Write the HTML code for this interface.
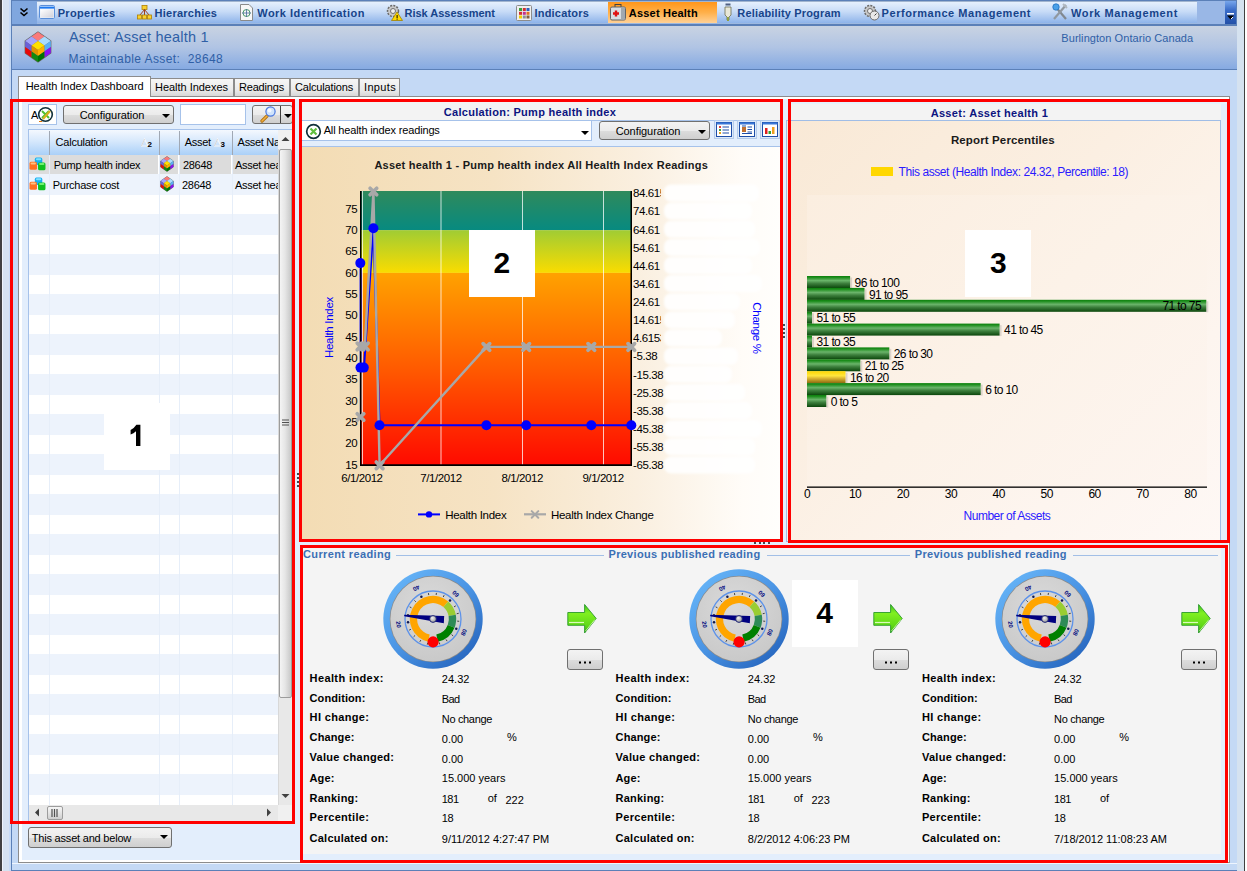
<!DOCTYPE html>
<html><head><meta charset="utf-8"><style>
*{box-sizing:border-box}
body{margin:0;width:1247px;height:871px;overflow:hidden;position:relative;background:#fff;font-family:"Liberation Sans",sans-serif;}
.a{position:absolute}
.t{position:absolute;white-space:pre;line-height:1}
.tb{font-weight:bold;font-size:11px;color:#17448a}
.btn{position:absolute;border:1px solid #707070;border-radius:3px;background:linear-gradient(#f3f3f3 0%,#ebebeb 50%,#dddddd 51%,#cfcfcf 100%)}
.tri{position:absolute;width:0;height:0;border-left:4px solid transparent;border-right:4px solid transparent;border-top:4px solid #000}
</style></head><body>
<!-- outer frame -->
<div class="a" style="left:0;top:0;width:2px;height:871px;background:#404040"></div>
<div class="a" style="left:2px;top:0;width:1px;height:871px;background:#eef3fa"></div>
<div class="a" style="left:3px;top:0;width:7px;height:871px;background:#d5e2f0"></div>
<div class="a" style="left:9px;top:0;width:2px;height:871px;background:#c7dbf6"></div>
<div class="a" style="left:11px;top:0;width:1px;height:871px;background:#5b80b8"></div>
<div class="a" style="left:12px;top:0;width:1225px;height:871px;background:#c4d9f5"></div>
<div class="a" style="left:12px;top:870px;width:1225px;height:1px;background:#5b80b8"></div>
<div class="a" style="left:1237px;top:0;width:7px;height:871px;background:#d5e2f0"></div>
<div class="a" style="left:1244px;top:0;width:1px;height:871px;background:#404040"></div>

<!-- toolbar -->
<div class="a" style="left:12px;top:0;width:1225px;height:26px;background:#5b80b8"></div>
<div class="a" style="left:12px;top:1px;width:1225px;height:23px;background:linear-gradient(#8098b8 0px,#e4effd 1.5px,#c8dcf7 45%,#8fb4ea 95%,#a8bcd8 100%)"></div>
<div class="a" style="left:12px;top:1px;width:25px;height:23px;background:#80a7df"></div>
<svg class="a" style="left:19px;top:7px" width="10" height="10" viewBox="0 0 10 10"><path d="M1.5 1.5 L5 4.5 L8.5 1.5 M1.5 5.5 L5 8.5 L8.5 5.5" stroke="#000" stroke-width="1.6" fill="none"></path></svg>
<div class="a" style="left:608px;top:2px;width:109px;height:21px;background:linear-gradient(#ff961a,#ffb04a 50%,#ffd196)"></div>
<div class="a" style="left:1197px;top:1px;width:28px;height:23px;background:#99b7e6"></div>
<div class="a" style="left:1225px;top:1px;width:11px;height:23px;background:linear-gradient(#77a6ec,#3a6cc8 40%,#2451a8)"></div>
<svg class="a" style="left:1226px;top:12px" width="9" height="9" viewBox="0 0 9 9"><rect x="1" y="1" width="7" height="1.5" fill="#fff"></rect><path d="M1 3.5 L8 3.5 L4.5 7.5Z" fill="#000"></path><path d="M5 7 L7 5" stroke="#fff" stroke-width="1"></path></svg>

<!-- toolbar icons -->
<svg class="a" style="left:39px;top:5px" width="16" height="14" viewBox="0 0 16 14"><defs><linearGradient id="gp" x1="0" y1="0" x2="1" y2="1"><stop offset="0" stop-color="#ffffff"></stop><stop offset="1" stop-color="#d0d0da"></stop></linearGradient></defs><rect x="0.5" y="0.5" width="15" height="13" rx="1.2" fill="#eaf2fc" stroke="#5a8ed8"></rect><rect x="1" y="1.6" width="14" height="2" fill="#1c78f0"></rect><rect x="1.5" y="4.5" width="13" height="8" fill="url(#gp)"></rect></svg>
<span class="t tb" style="left: 57.7px; top: 7.5px; letter-spacing: 0.328px;">Properties</span>
<svg class="a" style="left:137px;top:5px" width="15" height="15" viewBox="0 0 15 15"><rect x="5" y="0.5" width="5" height="4" fill="#f8d030" stroke="#b08000" stroke-width="0.8"></rect><path d="M7.5 4.5 L3 10 M7.5 4.5 L12 10 M7.5 4.5 L7.5 10" stroke="#a04020" stroke-width="1"></path><rect x="0.5" y="10" width="4" height="4" fill="#f8d030" stroke="#b08000" stroke-width="0.8"></rect><rect x="5.5" y="10" width="4" height="4" fill="#f8d030" stroke="#b08000" stroke-width="0.8"></rect><rect x="10.5" y="10" width="4" height="4" fill="#f8d030" stroke="#b08000" stroke-width="0.8"></rect></svg>
<span class="t tb" style="left: 154.6px; top: 7.5px; letter-spacing: 0.242px;">Hierarchies</span>
<svg class="a" style="left:240px;top:4px" width="13" height="17" viewBox="0 0 13 17"><path d="M0.5 0.5 H9 L12.5 4 V16.5 H0.5Z" fill="#f7f7f7" stroke="#8a8a8a"></path><circle cx="6.5" cy="9" r="3.5" fill="none" stroke="#4a9a6a"></circle><path d="M2 9 H11 M6.5 5 V13" stroke="#4a6a9a" stroke-width="0.8"></path></svg>
<span class="t tb" style="left: 257.3px; top: 7.5px; letter-spacing: 0.462px;">Work Identification</span>
<svg class="a" style="left:386px;top:4px" width="17" height="17" viewBox="0 0 17 17"><circle cx="7" cy="7" r="5.5" fill="#c8c8c8" stroke="#6a6a6a" stroke-width="1.5" stroke-dasharray="2 1.2"></circle><circle cx="7" cy="7" r="2.5" fill="#f0f0f0" stroke="#707070"></circle><path d="M11 8 L16.5 16.5 H5.5Z" fill="#ffd800" stroke="#a08000" stroke-width="0.8"></path><rect x="10.6" y="11" width="1" height="3" fill="#000"></rect><rect x="10.6" y="14.6" width="1" height="1" fill="#000"></rect></svg>
<span class="t tb" style="left: 404.6px; top: 7.5px; letter-spacing: -0.034px;">Risk Assessment</span>
<svg class="a" style="left:516px;top:5px" width="16" height="16" viewBox="0 0 16 16"><rect x="0.5" y="0.5" width="15" height="15" rx="1" fill="#f0f0f0" stroke="#8c8c8c"></rect><rect x="3" y="3" width="3" height="3" fill="#3aa03a"></rect><rect x="6.8" y="3" width="3" height="3" fill="#d03030"></rect><rect x="10.5" y="3" width="3" height="3" fill="#3060c0"></rect><rect x="3" y="6.8" width="3" height="3" fill="#d03030"></rect><rect x="6.8" y="6.8" width="3" height="3" fill="#c03090"></rect><rect x="10.5" y="6.8" width="3" height="3" fill="#e07020"></rect><rect x="3" y="10.5" width="3" height="3" fill="#f0d000"></rect><rect x="6.8" y="10.5" width="3" height="3" fill="#909090"></rect><rect x="10.5" y="10.5" width="3" height="3" fill="#806040"></rect></svg>
<span class="t tb" style="left: 534.5px; top: 7.5px; letter-spacing: 0.192px;">Indicators</span>
<svg class="a" style="left:610px;top:4px" width="16" height="17" viewBox="0 0 16 17"><rect x="5" y="0.5" width="6" height="3" fill="none" stroke="#404040"></rect><rect x="0.5" y="3" width="15" height="13" rx="1.5" fill="#d8dde2" stroke="#606468"></rect><rect x="11" y="3.5" width="4" height="12" fill="#a0a8b0"></rect><path d="M3 9.5 H9 M6 6.5 V12.5" stroke="#e01010" stroke-width="2.4"></path></svg>
<span class="t tb" style="left: 628.8px; top: 7.5px; color: rgb(0, 0, 0); letter-spacing: 0.205px;">Asset Health</span>
<svg class="a" style="left:724px;top:3px" width="8" height="19" viewBox="0 0 8 19"><rect x="1.5" y="0.5" width="5" height="2" fill="#506080"></rect><path d="M1 4 H7 V12 L5 14 V17 H3 V14 L1 12Z" fill="#e8e8d8" stroke="#707050" stroke-width="0.8"></path><rect x="3" y="14" width="2" height="4" fill="#90a040"></rect></svg>
<span class="t tb" style="left: 737.3px; top: 7.5px; letter-spacing: 0.165px;">Reliability Program</span>
<svg class="a" style="left:863px;top:4px" width="17" height="17" viewBox="0 0 17 17"><circle cx="7" cy="7" r="5.5" fill="#c8c8c8" stroke="#6a6a6a" stroke-width="1.5" stroke-dasharray="2 1.2"></circle><circle cx="7" cy="7" r="2.5" fill="#f0f0f0" stroke="#707070"></circle><circle cx="11.5" cy="11.5" r="4.5" fill="#e8e8e8" stroke="#6a6a6a"></circle><path d="M11.5 11.5 L13.5 9.5" stroke="#404040"></path></svg>
<span class="t tb" style="left: 881.6px; top: 7.5px; letter-spacing: 0.539px;">Performance Management</span>
<svg class="a" style="left:1052px;top:3px" width="16" height="18" viewBox="0 0 16 18"><path d="M2 2 L14 16" stroke="#808890" stroke-width="2.2"></path><path d="M14 2 L2 16" stroke="#9098a0" stroke-width="2.2"></path><circle cx="4" cy="4" r="3.2" fill="#4aa0e8" stroke="#2070c0" stroke-width="0.8"></circle><path d="M11 1 L15 5" stroke="#b0b8c0" stroke-width="2"></path></svg>
<span class="t tb" style="left: 1071px; top: 7.5px; letter-spacing: 0.627px;">Work Management</span>

<div class="a" style="left:1236px;top:0;width:1px;height:26px;background:#5b80b8"></div>
<!-- header band -->
<div class="a" style="left:12px;top:26px;width:1225px;height:43px;background:linear-gradient(#c9d3e2,#b0c4e4 50%,#86aae2)"></div>
<div class="a" style="left:12px;top:69px;width:1225px;height:1px;background:#5b80b8"></div>
<svg class="a" style="left:24px;top:31px" width="28" height="32" viewBox="0 0 28 32"><path d="M14.00,1.00 L26.80,10.00 L26.80,22.00 L14.00,31.00 L1.20,22.00 L1.20,10.00Z" fill="#6a6a6a" stroke="#6a6a6a" stroke-width="1.2" stroke-linejoin="round"></path><path d="M14.00,1.00 L7.60,5.50 L14.00,10.00 L20.40,5.50Z" fill="#fa7a7a"></path><path d="M7.60,5.50 L1.20,10.00 L7.60,14.50 L14.00,10.00Z" fill="#a4a4fa"></path><path d="M20.40,5.50 L14.00,10.00 L20.40,14.50 L26.80,10.00Z" fill="#a8dcff"></path><path d="M14.00,10.00 L7.60,14.50 L14.00,19.00 L20.40,14.50Z" fill="#ffe000"></path><path d="M1.20,10.00 L7.60,14.50 L7.60,20.50 L1.20,16.00Z" fill="#6a60d8"></path><path d="M7.60,14.50 L14.00,19.00 L14.00,25.00 L7.60,20.50Z" fill="#e09400"></path><path d="M1.20,16.00 L7.60,20.50 L7.60,26.50 L1.20,22.00Z" fill="#e80808"></path><path d="M7.60,20.50 L14.00,25.00 L14.00,31.00 L7.60,26.50Z" fill="#108a10"></path><path d="M26.80,10.00 L20.40,14.50 L20.40,20.50 L26.80,16.00Z" fill="#58b0f8"></path><path d="M20.40,14.50 L14.00,19.00 L14.00,25.00 L20.40,20.50Z" fill="#ffb000"></path><path d="M26.80,16.00 L20.40,20.50 L20.40,26.50 L26.80,22.00Z" fill="#8a10f0"></path><path d="M20.40,20.50 L14.00,25.00 L14.00,31.00 L20.40,26.50Z" fill="#007400"></path></svg>
<span class="t" style="left: 68.9px; top: 30.3px; font-size: 14.5px; color: rgb(47, 95, 166); letter-spacing: 0.213px;">Asset: Asset health 1</span>
<span class="t" style="left: 68.5px; top: 52.5px; font-size: 12px; color: rgb(47, 95, 166); letter-spacing: 0.407px;">Maintainable Asset:  28648</span>
<span class="t" style="left: 1061.3px; top: 33.3px; font-size: 11px; color: rgb(47, 95, 166); letter-spacing: 0.066px;">Burlington Ontario Canada</span>

<!-- tab strip -->
<div class="a" style="left:18px;top:76px;width:133px;height:22px;background:#fff;border:1px solid #8c8c8c;border-bottom:none"></div>
<div class="a" style="left:150px;top:78px;width:84px;height:19px;border:1px solid #8c8c8c;border-bottom:none;background:linear-gradient(#f6f6f6,#ebebeb 60%,#d4d4d4)"></div>
<div class="a" style="left:234px;top:78px;width:56px;height:19px;border:1px solid #8c8c8c;border-bottom:none;background:linear-gradient(#f6f6f6,#ebebeb 60%,#d4d4d4)"></div>
<div class="a" style="left:290px;top:78px;width:69px;height:19px;border:1px solid #8c8c8c;border-bottom:none;background:linear-gradient(#f6f6f6,#ebebeb 60%,#d4d4d4)"></div>
<div class="a" style="left:359px;top:78px;width:41px;height:19px;border:1px solid #8c8c8c;border-bottom:none;background:linear-gradient(#f6f6f6,#ebebeb 60%,#d4d4d4)"></div>
<span class="t" style="left: 25.7px; top: 81.2px; font-size: 11px; color: rgb(0, 0, 0); letter-spacing: -0.029px;">Health Index Dashboard</span>
<span class="t" style="left: 155px; top: 82.4px; font-size: 11px; color: rgb(0, 0, 0); letter-spacing: -0.028px;">Health Indexes</span>
<span class="t" style="left: 239px; top: 82.4px; font-size: 11px; color: rgb(0, 0, 0); letter-spacing: -0.186px;">Readings</span>
<span class="t" style="left: 295px; top: 82.4px; font-size: 11px; color: rgb(0, 0, 0); letter-spacing: -0.16px;">Calculations</span>
<span class="t" style="left: 364px; top: 82.4px; font-size: 11px; color: rgb(0, 0, 0); letter-spacing: 0.339px;">Inputs</span>

<!-- tab page -->
<div class="a" style="left:12px;top:863px;width:1225px;height:1px;background:#eef5fe"></div>
<div class="a" style="left:18px;top:96px;width:1212px;height:767px;border:1px solid #8c8c8c;background:#fff"></div>
<div class="a" style="left:19px;top:96px;width:131px;height:3px;background:#fff"></div>
<div class="a" style="left:22px;top:99px;width:1206px;height:761px;background:#e3eefc"></div>

<!-- PANEL 1 -->
<div class="a" style="left:28px;top:104px;width:29px;height:21px;background:#fff;border:1px solid #a6c2ea"></div>
<span class="t" style="left:31px;top:110px;font-size:11px;color:#000">A</span>
<svg class="a" style="left:37px;top:106px" width="17" height="17" viewBox="0 0 17 17"><circle cx="8.5" cy="8.5" r="6.8" fill="none" stroke="#10303a" stroke-width="1.6"></circle><path d="M5 5 L12 12 M12 5 L5 12" stroke="#50c030" stroke-width="2"></path><path d="M6 13 L13 5" stroke="#d8b020" stroke-width="2.2"></path><rect x="2" y="15" width="3" height="1" fill="#e07000"></rect></svg>
<div class="btn" style="left:63px;top:105px;width:111px;height:19px"></div>
<span class="t" style="left: 79.7px; top: 110px; font-size: 11px; color: rgb(0, 0, 0); letter-spacing: -0.064px;">Configuration</span>
<div class="tri" style="left:161.5px;top:113.5px"></div>
<div class="a" style="left:180px;top:104px;width:66px;height:21px;background:#fff;border:1px solid #a6c2ea"></div>
<div class="btn" style="left:252px;top:105px;width:41px;height:19px"></div>
<div class="a" style="left:280px;top:106px;width:1px;height:17px;background:#404040"></div>
<svg class="a" style="left:259px;top:105px" width="18" height="18" viewBox="0 0 18 18"><path d="M3 16 L8 11" stroke="#b07010" stroke-width="3.2" stroke-linecap="round"></path><path d="M3 16 L8 11" stroke="#f0b040" stroke-width="1.6" stroke-linecap="round"></path><circle cx="11.5" cy="6.5" r="4.6" fill="#d0e4fc" stroke="#4a78e0" stroke-width="1.2"></circle><circle cx="10.5" cy="5.5" r="2" fill="#f4f8ff"></circle></svg>
<div class="tri" style="left:284px;top:113.5px"></div>

<!-- grid -->
<div class="a" style="left:28px;top:129px;width:264px;height:692px;background:#fff;border-left:1px solid #a6c2ea;border-top:1px solid #a6c2ea"></div>
<div class="a" style="left:29px;top:174px;width:249px;height:21px;background:#edf3fc"></div>
<div class="a" style="left:29px;top:214px;width:249px;height:21px;background:#edf3fc"></div>
<div class="a" style="left:29px;top:254px;width:249px;height:21px;background:#edf3fc"></div>
<div class="a" style="left:29px;top:294px;width:249px;height:21px;background:#edf3fc"></div>
<div class="a" style="left:29px;top:334px;width:249px;height:21px;background:#edf3fc"></div>
<div class="a" style="left:29px;top:374px;width:249px;height:21px;background:#edf3fc"></div>
<div class="a" style="left:29px;top:414px;width:249px;height:21px;background:#edf3fc"></div>
<div class="a" style="left:29px;top:454px;width:249px;height:21px;background:#edf3fc"></div>
<div class="a" style="left:29px;top:494px;width:249px;height:21px;background:#edf3fc"></div>
<div class="a" style="left:29px;top:534px;width:249px;height:21px;background:#edf3fc"></div>
<div class="a" style="left:29px;top:574px;width:249px;height:21px;background:#edf3fc"></div>
<div class="a" style="left:29px;top:614px;width:249px;height:21px;background:#edf3fc"></div>
<div class="a" style="left:29px;top:654px;width:249px;height:21px;background:#edf3fc"></div>
<div class="a" style="left:29px;top:694px;width:249px;height:21px;background:#edf3fc"></div>
<div class="a" style="left:29px;top:734px;width:249px;height:21px;background:#edf3fc"></div>
<div class="a" style="left:29px;top:774px;width:249px;height:21px;background:#edf3fc"></div>
<div class="a" style="left:49px;top:155px;width:1px;height:650px;background:#e6eef9"></div>
<div class="a" style="left:159px;top:155px;width:1px;height:650px;background:#e6eef9"></div>
<div class="a" style="left:179px;top:155px;width:1px;height:650px;background:#e6eef9"></div>
<div class="a" style="left:232px;top:155px;width:1px;height:650px;background:#e6eef9"></div>
<!-- header -->
<div class="a" style="left:29px;top:130px;width:249px;height:25px;background:linear-gradient(#f4f8fe,#d6e8fc 45%,#aad0f8)"></div>
<div class="a" style="left:49px;top:131px;width:1px;height:24px;background:#a0a8b4"></div>
<div class="a" style="left:159px;top:131px;width:1px;height:24px;background:#a0a8b4"></div>
<div class="a" style="left:179px;top:131px;width:1px;height:24px;background:#a0a8b4"></div>
<div class="a" style="left:232px;top:131px;width:1px;height:24px;background:#a0a8b4"></div>
<span class="t" style="left: 55.6px; top: 136.5px; font-size: 11px; color: rgb(0, 0, 0); letter-spacing: -0.238px;">Calculation</span>
<svg class="a" style="left:141px;top:138px" width="13" height="10" viewBox="0 0 13 10"><path d="M3.5 1 L0.5 8 H7Z" fill="none" stroke="#f8f8f8" stroke-width="1.1"></path><path d="M3.5 1 L0.5 8" stroke="#c0c0c0" stroke-width="0.6"></path></svg>
<span class="t" style="left:147.6px;top:141px;font-size:8px;font-weight:bold;color:#000">2</span>
<span class="t" style="left: 184.7px; top: 136.5px; font-size: 11px; color: rgb(0, 0, 0); letter-spacing: -0.263px;">Asset</span>
<svg class="a" style="left:214px;top:138px" width="13" height="10" viewBox="0 0 13 10"><path d="M3.5 1 L0.5 8 H7Z" fill="none" stroke="#f8f8f8" stroke-width="1.1"></path><path d="M3.5 1 L0.5 8" stroke="#c0c0c0" stroke-width="0.6"></path></svg>
<span class="t" style="left:220.6px;top:141px;font-size:8px;font-weight:bold;color:#000">3</span>
<div class="a" style="left:233px;top:130px;width:45px;height:25px;overflow:hidden"><span class="t" style="left:4.6px;top:6.5px;font-size:11px;color:#000;letter-spacing:-0.3px">Asset Name</span></div>
<!-- row 1 selected -->
<div class="a" style="left:29px;top:155px;width:20px;height:19px;background:#dcdcdc"></div>
<div class="a" style="left:50px;top:155px;width:108px;height:19px;background:#dcdcdc"></div>
<div class="a" style="left:160px;top:155px;width:18px;height:19px;background:#dcdcdc"></div>
<div class="a" style="left:180px;top:155px;width:51px;height:19px;background:#dcdcdc"></div>
<div class="a" style="left:233px;top:155px;width:45px;height:19px;background:#dcdcdc"></div>
<span class="t" style="left: 53.7px; top: 159.6px; font-size: 11px; color: rgb(0, 0, 0); letter-spacing: -0.266px;">Pump health index</span>
<span class="t" style="left: 182.9px; top: 159.6px; font-size: 11px; color: rgb(0, 0, 0); letter-spacing: -0.279px;">28648</span>
<div class="a" style="left:233px;top:155px;width:45px;height:19px;overflow:hidden"><span class="t" style="left:2px;top:4.6px;font-size:11px;color:#000;letter-spacing:-0.3px">Asset health 1</span></div>
<span class="t" style="left: 52.7px; top: 180.3px; font-size: 11px; color: rgb(0, 0, 0); letter-spacing: -0.254px;">Purchase cost</span>
<span class="t" style="left: 182px; top: 180.3px; font-size: 11px; color: rgb(0, 0, 0); letter-spacing: -0.279px;">28648</span>
<div class="a" style="left:233px;top:174px;width:45px;height:20px;overflow:hidden"><span class="t" style="left:2px;top:6.3px;font-size:11px;color:#000;letter-spacing:-0.3px">Asset health 1</span></div>
<svg width="0" height="0" style="position:absolute"><defs>
<symbol id="cube" viewBox="0 0 28 32"><path d="M14.00,1.00 L26.80,10.00 L26.80,22.00 L14.00,31.00 L1.20,22.00 L1.20,10.00Z" fill="#6a6a6a" stroke="#6a6a6a" stroke-width="1.2" stroke-linejoin="round"></path><path d="M14.00,1.00 L7.60,5.50 L14.00,10.00 L20.40,5.50Z" fill="#fa7a7a"></path><path d="M7.60,5.50 L1.20,10.00 L7.60,14.50 L14.00,10.00Z" fill="#a4a4fa"></path><path d="M20.40,5.50 L14.00,10.00 L20.40,14.50 L26.80,10.00Z" fill="#a8dcff"></path><path d="M14.00,10.00 L7.60,14.50 L14.00,19.00 L20.40,14.50Z" fill="#ffe000"></path><path d="M1.20,10.00 L7.60,14.50 L7.60,20.50 L1.20,16.00Z" fill="#6a60d8"></path><path d="M7.60,14.50 L14.00,19.00 L14.00,25.00 L7.60,20.50Z" fill="#e09400"></path><path d="M1.20,16.00 L7.60,20.50 L7.60,26.50 L1.20,22.00Z" fill="#e80808"></path><path d="M7.60,20.50 L14.00,25.00 L14.00,31.00 L7.60,26.50Z" fill="#108a10"></path><path d="M26.80,10.00 L20.40,14.50 L20.40,20.50 L26.80,16.00Z" fill="#58b0f8"></path><path d="M20.40,14.50 L14.00,19.00 L14.00,25.00 L20.40,20.50Z" fill="#ffb000"></path><path d="M26.80,16.00 L20.40,20.50 L20.40,26.50 L26.80,22.00Z" fill="#8a10f0"></path><path d="M20.40,20.50 L14.00,25.00 L14.00,31.00 L20.40,26.50Z" fill="#007400"></path></symbol>
<symbol id="cubes3" viewBox="0 0 16 14">
 <rect x="5.5" y="0.5" width="7" height="7" rx="1.5" fill="#18b0f0"></rect><rect x="6.5" y="1" width="5" height="2" rx="1" fill="#80e0ff"></rect>
 <rect x="0.5" y="4.5" width="7" height="7.5" rx="1.5" fill="#ff7020"></rect><rect x="1.5" y="5" width="5" height="2" rx="1" fill="#ffc080"></rect>
 <rect x="8.5" y="5" width="7" height="7.5" rx="1.5" fill="#10c020"></rect><rect x="9.5" y="5.5" width="5" height="2" rx="1" fill="#70f070"></rect>
</symbol>
</defs></svg>
<svg class="a" style="left:29px;top:157px" width="17" height="15"><use href="#cubes3" width="17" height="15"></use></svg>
<svg class="a" style="left:29px;top:177px" width="17" height="15"><use href="#cubes3" width="17" height="15"></use></svg>
<svg class="a" style="left:160px;top:156px" width="14" height="16"><use href="#cube" width="14" height="16"></use></svg>
<svg class="a" style="left:160px;top:176px" width="14" height="16"><use href="#cube" width="14" height="16"></use></svg>
<!-- v scrollbar -->
<div class="a" style="left:278px;top:130px;width:14px;height:675px;background:#e8e8e8;border-left:1px solid #d8d8d8"></div>
<div class="a" style="left:278px;top:130px;width:14px;height:19px;background:#f0f0f0"></div>
<svg class="a" style="left:281px;top:136px" width="9" height="6"><path d="M0.5 5 L4.5 1 L8.5 5Z" fill="#404040"></path></svg>
<div class="a" style="left:279px;top:149px;width:13px;height:549px;border:1px solid #9c9c9c;border-radius:2px;background:linear-gradient(90deg,#f4f4f4,#e6e6e6 45%,#c8c8c8)"></div>
<svg class="a" style="left:282px;top:419px" width="8" height="7"><path d="M0 1 H7 M0 3.5 H7 M0 6 H7" stroke="#505050" stroke-width="1.2"></path></svg>
<svg class="a" style="left:281px;top:793px" width="9" height="6"><path d="M0.5 1 L4.5 5 L8.5 1Z" fill="#404040"></path></svg>
<!-- h scrollbar -->
<div class="a" style="left:29px;top:805px;width:249px;height:16px;background:#e8e8e8"></div>
<div class="a" style="left:278px;top:805px;width:14px;height:16px;background:#f0f0f0"></div>
<svg class="a" style="left:34px;top:808px" width="6" height="9"><path d="M5 0.5 L1 4.5 L5 8.5Z" fill="#404040"></path></svg>
<div class="a" style="left:47px;top:806px;width:16px;height:14px;border:1px solid #9c9c9c;border-radius:2px;background:linear-gradient(#f6f6f6,#e4e4e4 50%,#cfcfcf)"></div>
<svg class="a" style="left:51px;top:809px" width="8" height="8"><path d="M1 0 V8 M3.5 0 V8 M6 0 V8" stroke="#505050" stroke-width="1.2"></path></svg>
<svg class="a" style="left:266px;top:808px" width="6" height="9"><path d="M1 0.5 L5 4.5 L1 8.5Z" fill="#404040"></path></svg>
<!-- bottom combo -->
<div class="btn" style="left:28px;top:827px;width:144px;height:21px"></div>
<span class="t" style="left: 31.8px; top: 833px; font-size: 11px; color: rgb(0, 0, 0); letter-spacing: -0.202px;">This asset and below</span>
<div class="tri" style="left:160px;top:835px"></div>
<!-- white box label 1 -->
<div class="a" style="left:104px;top:403px;width:66px;height:67px;background:#fff"></div>
<svg class="a" style="left:0;top:0" width="300" height="500"><path d="M136,424.8 H140.4 V445.9 H136 V431.2 Q133.6,433.4 130.6,434.4 V429.9 Q134.2,428.3 136.4,424.8Z" fill="#000"></path></svg>
<!-- red box 1 -->
<div class="a" style="left:10px;top:99px;width:285px;height:725px;border:3px solid #ff0000"></div>


<!-- PANEL 2 -->
<div class="a" style="left:302px;top:102px;width:478px;height:18px;background:#f3f3f3"></div>
<div class="a" style="left:302px;top:120px;width:478px;height:27px;background:#e3eefc;border-top:1px solid #a6c2ea;border-bottom:1px solid #a6c2ea"></div>
<div class="a" style="left:302px;top:121px;width:290px;height:20px;background:#fff;border-right:1px solid #a6c2ea;border-bottom:1px solid #a6c2ea"></div>
<span class="t" style="left: 443.8px; top: 107.2px; font-size: 11px; font-weight: bold; color: rgb(12, 20, 128); letter-spacing: 0.283px;">Calculation: Pump health index</span>
<svg class="a" style="left:305px;top:123px" width="17" height="17" viewBox="0 0 17 17"><circle cx="8.5" cy="8.5" r="6.8" fill="#fff" stroke="#10303a" stroke-width="1.7"></circle><path d="M5.5 5.5 L11.5 11.5 M11.5 5.5 L5.5 11.5" stroke="#60c040" stroke-width="2.2"></path></svg>
<span class="t" style="left: 323.7px; top: 125px; font-size: 11px; color: rgb(0, 0, 0); letter-spacing: -0.154px;">All health index readings</span>
<div class="tri" style="left:580.5px;top:130.5px"></div>
<div class="btn" style="left:599px;top:121px;width:111px;height:19px"></div>
<span class="t" style="left: 615.7px; top: 126px; font-size: 11px; color: rgb(0, 0, 0); letter-spacing: -0.064px;">Configuration</span>
<div class="tri" style="left:697.5px;top:129.5px"></div>
<div class="a" style="left:714px;top:120px;width:20px;height:19px;background:#dde9f8;border:1px solid #b4cbea"></div>
<div class="a" style="left:737px;top:120px;width:20px;height:19px;background:#dde9f8;border:1px solid #b4cbea"></div>
<div class="a" style="left:760px;top:120px;width:20px;height:19px;background:#dde9f8;border:1px solid #b4cbea"></div>
<svg class="a" style="left:716px;top:122px" width="16" height="15" viewBox="0 0 16 15"><rect x="0.5" y="0.5" width="15" height="14" fill="#fff" stroke="#1e4ea8"></rect><rect x="0.5" y="0.5" width="15" height="2" fill="#3a78d8"></rect><rect x="3" y="4" width="2" height="2" fill="#e04040"></rect><rect x="3" y="7" width="2" height="2" fill="#40a040"></rect><rect x="3" y="10" width="2" height="2" fill="#e0a020"></rect><path d="M6.5 5 H13 M6.5 8 H13 M6.5 11 H13" stroke="#1e4ea8" stroke-width="1.2"></path></svg>
<svg class="a" style="left:739px;top:122px" width="16" height="15" viewBox="0 0 16 15"><rect x="0.5" y="0.5" width="15" height="14" fill="#fff" stroke="#1e4ea8"></rect><rect x="0.5" y="0.5" width="15" height="2" fill="#3a78d8"></rect><rect x="3" y="5" width="4" height="5" fill="#c07030"></rect><path d="M8.5 5 H13 M8.5 7.5 H13 M8.5 10 H13 M3 4 H7 M3 11.5 H13" stroke="#1e4ea8" stroke-width="1.1"></path></svg>
<svg class="a" style="left:762px;top:122px" width="16" height="15" viewBox="0 0 16 15"><rect x="0.5" y="0.5" width="15" height="14" fill="#fff" stroke="#1e4ea8"></rect><rect x="0.5" y="0.5" width="15" height="2" fill="#3a78d8"></rect><rect x="3" y="6" width="2.5" height="6" fill="#e02020"></rect><rect x="6.5" y="9" width="2.5" height="3" fill="#30a030"></rect><rect x="10" y="5" width="2.5" height="7" fill="#f0a020"></rect></svg>
<div class="a" style="left:302px;top:147px;width:478px;height:392px;background:linear-gradient(90deg,#f3dcb4,#f6e3c4 40%,#faefdf 70%,#fffcf8 92%,#fffefc)"></div>
<svg class="a" style="left:0;top:0" width="1247" height="871" viewBox="0 0 1247 871"><defs><linearGradient id="b1" x1="0" y1="0" x2="0" y2="1"><stop offset="0" stop-color="#2f8a5c"></stop><stop offset="1" stop-color="#078a80"></stop></linearGradient><linearGradient id="b2" x1="0" y1="0" x2="0" y2="1"><stop offset="0" stop-color="#a0cc34"></stop><stop offset="1" stop-color="#fadc00"></stop></linearGradient><linearGradient id="b3" x1="0" y1="0" x2="0" y2="1"><stop offset="0" stop-color="#ffa200"></stop><stop offset="0.5" stop-color="#ff5a00"></stop><stop offset="1" stop-color="#ff0a00"></stop></linearGradient><filter id="blr"><feGaussianBlur stdDeviation="3"></feGaussianBlur></filter><filter id="blr1" x="-10%" y="-10%" width="120%" height="120%"><feGaussianBlur stdDeviation="1.2"></feGaussianBlur></filter></defs><rect x="361" y="191" width="270" height="39.2" fill="url(#b1)"></rect><rect x="361" y="230.2" width="270" height="42.7" fill="url(#b2)"></rect><rect x="361" y="272.9" width="270" height="192.1" fill="url(#b3)"></rect><rect x="362.0" y="191" width="1" height="274" fill="#ffffff" opacity="0.75"></rect><rect x="440.5" y="191" width="1" height="274" fill="#ffffff" opacity="0.75"></rect><rect x="522.0" y="191" width="1" height="274" fill="#ffffff" opacity="0.75"></rect><rect x="603.0" y="191" width="1" height="274" fill="#ffffff" opacity="0.75"></rect><rect x="360" y="191" width="1.3" height="275" fill="#000"></rect><rect x="630.7" y="191" width="1.3" height="275" fill="#000"></rect><rect x="360" y="464.5" width="272" height="1.5" fill="#000"></rect><text x="357.3" y="468.7" text-anchor="end" font-size="11.5" fill="#000" font-family="Liberation Sans" letter-spacing="-0.35">15</text><text x="357.3" y="447.3" text-anchor="end" font-size="11.5" fill="#000" font-family="Liberation Sans" letter-spacing="-0.35">20</text><text x="357.3" y="426.0" text-anchor="end" font-size="11.5" fill="#000" font-family="Liberation Sans" letter-spacing="-0.35">25</text><text x="357.3" y="404.6" text-anchor="end" font-size="11.5" fill="#000" font-family="Liberation Sans" letter-spacing="-0.35">30</text><text x="357.3" y="383.3" text-anchor="end" font-size="11.5" fill="#000" font-family="Liberation Sans" letter-spacing="-0.35">35</text><text x="357.3" y="361.9" text-anchor="end" font-size="11.5" fill="#000" font-family="Liberation Sans" letter-spacing="-0.35">40</text><text x="357.3" y="340.6" text-anchor="end" font-size="11.5" fill="#000" font-family="Liberation Sans" letter-spacing="-0.35">45</text><text x="357.3" y="319.3" text-anchor="end" font-size="11.5" fill="#000" font-family="Liberation Sans" letter-spacing="-0.35">50</text><text x="357.3" y="297.9" text-anchor="end" font-size="11.5" fill="#000" font-family="Liberation Sans" letter-spacing="-0.35">55</text><text x="357.3" y="276.6" text-anchor="end" font-size="11.5" fill="#000" font-family="Liberation Sans" letter-spacing="-0.35">60</text><text x="357.3" y="255.2" text-anchor="end" font-size="11.5" fill="#000" font-family="Liberation Sans" letter-spacing="-0.35">65</text><text x="357.3" y="233.9" text-anchor="end" font-size="11.5" fill="#000" font-family="Liberation Sans" letter-spacing="-0.35">70</text><text x="357.3" y="212.5" text-anchor="end" font-size="11.5" fill="#000" font-family="Liberation Sans" letter-spacing="-0.35">75</text><clipPath id="rc2"><rect x="632" y="180" width="29" height="300"></rect></clipPath><clipPath id="rc"><rect x="632" y="180" width="32" height="300"></rect></clipPath><g clip-path="url(#rc)"><g clip-path="url(#rc2)"><text x="633" y="197.2" font-size="11.5" fill="#000" font-family="Liberation Sans" letter-spacing="-0.4">84.6153</text></g><text x="633" y="215.3" font-size="11.5" fill="#000" font-family="Liberation Sans" letter-spacing="-0.4">74.61</text><text x="633" y="233.5" font-size="11.5" fill="#000" font-family="Liberation Sans" letter-spacing="-0.4">64.61</text><text x="633" y="251.6" font-size="11.5" fill="#000" font-family="Liberation Sans" letter-spacing="-0.4">54.61</text><text x="633" y="269.7" font-size="11.5" fill="#000" font-family="Liberation Sans" letter-spacing="-0.4">44.61</text><text x="633" y="287.8" font-size="11.5" fill="#000" font-family="Liberation Sans" letter-spacing="-0.4">34.61</text><text x="633" y="306.0" font-size="11.5" fill="#000" font-family="Liberation Sans" letter-spacing="-0.4">24.61</text><g clip-path="url(#rc2)"><text x="633" y="324.1" font-size="11.5" fill="#000" font-family="Liberation Sans" letter-spacing="-0.4">14.6153</text></g><g clip-path="url(#rc2)"><text x="633" y="342.2" font-size="11.5" fill="#000" font-family="Liberation Sans" letter-spacing="-0.4">4.6153</text></g><text x="633" y="360.4" font-size="11.5" fill="#000" font-family="Liberation Sans" letter-spacing="-0.4">-5.38</text><text x="633" y="378.5" font-size="11.5" fill="#000" font-family="Liberation Sans" letter-spacing="-0.4">-15.38</text><text x="633" y="396.6" font-size="11.5" fill="#000" font-family="Liberation Sans" letter-spacing="-0.4">-25.38</text><text x="633" y="414.8" font-size="11.5" fill="#000" font-family="Liberation Sans" letter-spacing="-0.4">-35.38</text><text x="633" y="432.9" font-size="11.5" fill="#000" font-family="Liberation Sans" letter-spacing="-0.4">-45.38</text><text x="633" y="451.0" font-size="11.5" fill="#000" font-family="Liberation Sans" letter-spacing="-0.4">-55.38</text><text x="633" y="469.1" font-size="11.5" fill="#000" font-family="Liberation Sans" letter-spacing="-0.4">-65.38</text></g><g filter="url(#blr1)"><rect x="664" y="184.5" width="95" height="17" rx="7" fill="#ffffff" opacity="0.9"></rect><rect x="664" y="202.6" width="88" height="17" rx="7" fill="#ffffff" opacity="0.9"></rect><rect x="664" y="220.8" width="91" height="17" rx="7" fill="#ffffff" opacity="0.9"></rect><rect x="664" y="238.9" width="96" height="17" rx="7" fill="#ffffff" opacity="0.9"></rect><rect x="664" y="257.0" width="88" height="17" rx="7" fill="#ffffff" opacity="0.9"></rect><rect x="664" y="275.1" width="98" height="17" rx="7" fill="#ffffff" opacity="0.9"></rect><rect x="664" y="293.3" width="76" height="17" rx="7" fill="#ffffff" opacity="0.9"></rect><rect x="664" y="311.4" width="71" height="17" rx="7" fill="#ffffff" opacity="0.9"></rect><rect x="664" y="329.5" width="58" height="17" rx="7" fill="#ffffff" opacity="0.9"></rect><rect x="664" y="347.7" width="74" height="17" rx="7" fill="#ffffff" opacity="0.9"></rect><rect x="664" y="365.8" width="68" height="17" rx="7" fill="#ffffff" opacity="0.9"></rect><rect x="664" y="383.9" width="81" height="17" rx="7" fill="#ffffff" opacity="0.9"></rect><rect x="664" y="402.1" width="88" height="17" rx="7" fill="#ffffff" opacity="0.9"></rect><rect x="664" y="420.2" width="98" height="17" rx="7" fill="#ffffff" opacity="0.9"></rect><rect x="664" y="438.3" width="91" height="17" rx="7" fill="#ffffff" opacity="0.9"></rect><rect x="664" y="456.4" width="91" height="17" rx="7" fill="#ffffff" opacity="0.9"></rect></g><text x="361.9" y="481.6" text-anchor="middle" font-size="11.5" fill="#000" font-family="Liberation Sans" letter-spacing="-0.42">6/1/2012</text><text x="441" y="481.6" text-anchor="middle" font-size="11.5" fill="#000" font-family="Liberation Sans" letter-spacing="-0.42">7/1/2012</text><text x="522.3" y="481.6" text-anchor="middle" font-size="11.5" fill="#000" font-family="Liberation Sans" letter-spacing="-0.42">8/1/2012</text><text x="603.1" y="481.6" text-anchor="middle" font-size="11.5" fill="#000" font-family="Liberation Sans" letter-spacing="-0.42">9/1/2012</text><text x="0" y="0" transform="translate(332.5,327.5) rotate(-90)" text-anchor="middle" font-size="11.5" fill="#0000ff" font-family="Liberation Sans" letter-spacing="-0.3">Health Index</text><text x="0" y="0" transform="translate(753,328) rotate(90)" text-anchor="middle" font-size="11.5" fill="#0000ff" font-family="Liberation Sans" letter-spacing="-0.3">Change %</text><polyline points="360.6,263.1 360.6,367.6 364,367.6 373.4,228.2 379.5,425.3 631.3,425.3" fill="none" stroke="#0000ff" stroke-width="2" stroke-linejoin="round"></polyline><polyline points="360.5,417 360.5,346.4 364.8,346.4 373.4,191.5 379.6,465.3 486.4,346.9 526.2,346.9 591.3,346.9 631.3,346.9" fill="none" stroke="#a8a8a8" stroke-width="2.4" stroke-linejoin="round"></polyline><rect x="360" y="191" width="1.3" height="275" fill="#000"></rect><rect x="630.7" y="191" width="1.3" height="275" fill="#000"></rect><rect x="360" y="464.5" width="272" height="1.5" fill="#000"></rect><path d="M370.09999999999997,188.2 L376.7,194.8 M376.7,188.2 L370.09999999999997,194.8" stroke="#a8a8a8" stroke-width="3.7" stroke-linecap="round"></path><path d="M357.2,343.09999999999997 L363.8,349.7 M363.8,343.09999999999997 L357.2,349.7" stroke="#a8a8a8" stroke-width="3.7" stroke-linecap="round"></path><path d="M361.5,343.09999999999997 L368.1,349.7 M368.1,343.09999999999997 L361.5,349.7" stroke="#a8a8a8" stroke-width="3.7" stroke-linecap="round"></path><path d="M357.2,413.7 L363.8,420.3 M363.8,413.7 L357.2,420.3" stroke="#a8a8a8" stroke-width="3.7" stroke-linecap="round"></path><path d="M376.3,462.0 L382.90000000000003,468.6 M382.90000000000003,462.0 L376.3,468.6" stroke="#a8a8a8" stroke-width="3.7" stroke-linecap="round"></path><path d="M483.09999999999997,343.59999999999997 L489.7,350.2 M489.7,343.59999999999997 L483.09999999999997,350.2" stroke="#a8a8a8" stroke-width="3.7" stroke-linecap="round"></path><path d="M522.9000000000001,343.59999999999997 L529.5,350.2 M529.5,343.59999999999997 L522.9000000000001,350.2" stroke="#a8a8a8" stroke-width="3.7" stroke-linecap="round"></path><path d="M588.0,343.59999999999997 L594.5999999999999,350.2 M594.5999999999999,343.59999999999997 L588.0,350.2" stroke="#a8a8a8" stroke-width="3.7" stroke-linecap="round"></path><path d="M628.0,343.59999999999997 L634.5999999999999,350.2 M634.5999999999999,343.59999999999997 L628.0,350.2" stroke="#a8a8a8" stroke-width="3.7" stroke-linecap="round"></path><circle cx="360.3" cy="263.1" r="5" fill="#0000ff"></circle><circle cx="373.4" cy="228.2" r="5" fill="#0000ff"></circle><circle cx="360.5" cy="367.6" r="5" fill="#0000ff"></circle><circle cx="363.8" cy="367.6" r="5" fill="#0000ff"></circle><circle cx="379.5" cy="425.3" r="5" fill="#0000ff"></circle><circle cx="486.4" cy="425.3" r="5" fill="#0000ff"></circle><circle cx="526.2" cy="425.3" r="5" fill="#0000ff"></circle><circle cx="591.3" cy="425.3" r="5" fill="#0000ff"></circle><circle cx="631.3" cy="425.3" r="5" fill="#0000ff"></circle><rect x="418" y="513.4" width="22" height="2" fill="#0000ff"></rect><circle cx="429" cy="514.4" r="3.2" fill="#0000ff"></circle><text x="445.2" y="518.5" font-size="11.5" fill="#000" font-family="Liberation Sans" letter-spacing="-0.28">Health Index</text><rect x="524" y="513.2" width="22" height="2.2" fill="#a8a8a8"></rect><path d="M531.7,511.09999999999997 L538.3,517.6999999999999 M538.3,511.09999999999997 L531.7,517.6999999999999" stroke="#a8a8a8" stroke-width="2" stroke-linecap="round"></path><text x="551" y="518.5" font-size="11.5" fill="#000" font-family="Liberation Sans" letter-spacing="-0.29">Health Index Change</text><text x="374.4" y="169" font-size="11" font-weight="bold" fill="#1a1a1a" font-family="Liberation Sans" letter-spacing="0.23">Asset health 1 - Pump health index All Health Index Readings</text></svg>
<div class="a" style="left:469px;top:230px;width:66px;height:67px;background:#fff"></div>
<span class="t" style="left:493.6px;top:247.5px;font-size:30px;font-weight:bold;color:#000">2</span>
<div class="a" style="left:299px;top:99px;width:484px;height:443px;border:3px solid #ff0000"></div>

<div class="a" style="left:754.0px;top:541.8px;width:2px;height:2px;background:#404850"></div><div class="a" style="left:758.5px;top:541.8px;width:2px;height:2px;background:#404850"></div><div class="a" style="left:763.0px;top:541.8px;width:2px;height:2px;background:#404850"></div><div class="a" style="left:767.5px;top:541.8px;width:2px;height:2px;background:#404850"></div><div class="a" style="left:782.6px;top:323.5px;width:2px;height:2px;background:#404850"></div><div class="a" style="left:782.6px;top:327.5px;width:2px;height:2px;background:#404850"></div><div class="a" style="left:782.6px;top:331.5px;width:2px;height:2px;background:#404850"></div><div class="a" style="left:782.6px;top:335.5px;width:2px;height:2px;background:#404850"></div><div class="a" style="left:296.8px;top:472.5px;width:2px;height:2px;background:#404850"></div><div class="a" style="left:296.8px;top:476.5px;width:2px;height:2px;background:#404850"></div><div class="a" style="left:296.8px;top:480.5px;width:2px;height:2px;background:#404850"></div><div class="a" style="left:296.8px;top:484.5px;width:2px;height:2px;background:#404850"></div>

<!-- PANEL 3 -->
<div class="a" style="left:791px;top:102px;width:436px;height:2px;background:#e4f2fc"></div>
<div class="a" style="left:791px;top:104px;width:430px;height:16px;background:#f3f3f3"></div>
<div class="a" style="left:786px;top:120px;width:435px;height:422px;border:1px solid #a0bde6;background:linear-gradient(135deg,#f9e9d6 0%,#fbefe2 40%,#fdf5ef 75%,#fef8f5 100%)"></div>
<div class="a" style="left:807px;top:195px;width:400px;height:292px;background:linear-gradient(135deg,#fbeee0,#fcf2e8 50%,#fdf5f0)"></div>
<span class="t" style="left: 930.7px; top: 108px; font-size: 11px; font-weight: bold; color: rgb(12, 20, 128); letter-spacing: 0.311px;">Asset: Asset health 1</span>
<span class="t" style="left: 950.9px; top: 134.5px; font-size: 11.5px; font-weight: bold; color: rgb(26, 26, 26); letter-spacing: 0.132px;">Report Percentiles</span>
<div class="a" style="left:871px;top:167px;width:22px;height:9px;background:#ffd700"></div>
<svg class="a" style="left:0;top:0" width="1247" height="871" viewBox="0 0 1247 871"><defs><linearGradient id="gb" x1="0" y1="0" x2="0" y2="1"><stop offset="0" stop-color="#0b800b"></stop><stop offset="0.12" stop-color="#1e8e1e"></stop><stop offset="0.38" stop-color="#6ab46a"></stop><stop offset="0.62" stop-color="#3d7f3d"></stop><stop offset="1" stop-color="#0b460b"></stop></linearGradient><linearGradient id="gy" x1="0" y1="0" x2="0" y2="1"><stop offset="0" stop-color="#ffd700"></stop><stop offset="0.38" stop-color="#ffe640"></stop><stop offset="0.62" stop-color="#d8b030"></stop><stop offset="1" stop-color="#8a6a10"></stop></linearGradient></defs><text x="898.6" y="175.9" font-size="12" fill="#2a1aff" font-family="Liberation Sans" letter-spacing="-0.43">This asset (Health Index: 24.32, Percentile: 18)</text><rect x="850.1" y="277.5" width="2" height="11" fill="#000" opacity="0.12"></rect><rect x="807" y="276.0" width="43.1" height="12" fill="url(#gb)"></rect><rect x="864.5" y="289.4" width="2" height="11" fill="#000" opacity="0.12"></rect><rect x="807" y="287.9" width="57.5" height="12" fill="url(#gb)"></rect><rect x="1206.3" y="301.3" width="2" height="11" fill="#000" opacity="0.12"></rect><rect x="807" y="299.8" width="399.3" height="12" fill="url(#gb)"></rect><rect x="812" y="313.2" width="2" height="11" fill="#000" opacity="0.12"></rect><rect x="807" y="311.7" width="5.0" height="12" fill="url(#gb)"></rect><rect x="999.6" y="325.1" width="2" height="11" fill="#000" opacity="0.12"></rect><rect x="807" y="323.6" width="192.6" height="12" fill="url(#gb)"></rect><rect x="812" y="337.0" width="2" height="11" fill="#000" opacity="0.12"></rect><rect x="807" y="335.5" width="5.0" height="12" fill="url(#gb)"></rect><rect x="889.3" y="348.9" width="2" height="11" fill="#000" opacity="0.12"></rect><rect x="807" y="347.4" width="82.3" height="12" fill="url(#gb)"></rect><rect x="860.3" y="360.8" width="2" height="11" fill="#000" opacity="0.12"></rect><rect x="807" y="359.3" width="53.3" height="12" fill="url(#gb)"></rect><rect x="845.5" y="372.7" width="2" height="11" fill="#000" opacity="0.12"></rect><rect x="807" y="371.2" width="38.5" height="12" fill="url(#gy)"></rect><rect x="980.7" y="384.6" width="2" height="11" fill="#000" opacity="0.12"></rect><rect x="807" y="383.1" width="173.7" height="12" fill="url(#gb)"></rect><rect x="826.3" y="396.5" width="2" height="11" fill="#000" opacity="0.12"></rect><rect x="807" y="395.0" width="19.3" height="12" fill="url(#gb)"></rect><text x="854.6" y="286.6" font-size="12" fill="#000" font-family="Liberation Sans" letter-spacing="-0.6">96 to 100</text><text x="869.0" y="298.5" font-size="12" fill="#000" font-family="Liberation Sans" letter-spacing="-0.6">91 to 95</text><text x="1162.4" y="310.4" font-size="12" fill="#000" font-family="Liberation Sans" letter-spacing="-0.6">71 to 75</text><text x="816.5" y="322.3" font-size="12" fill="#000" font-family="Liberation Sans" letter-spacing="-0.6">51 to 55</text><text x="1004.1" y="334.2" font-size="12" fill="#000" font-family="Liberation Sans" letter-spacing="-0.6">41 to 45</text><text x="816.5" y="346.1" font-size="12" fill="#000" font-family="Liberation Sans" letter-spacing="-0.6">31 to 35</text><text x="893.8" y="358.0" font-size="12" fill="#000" font-family="Liberation Sans" letter-spacing="-0.6">26 to 30</text><text x="864.8" y="369.9" font-size="12" fill="#000" font-family="Liberation Sans" letter-spacing="-0.6">21 to 25</text><text x="850.0" y="381.8" font-size="12" fill="#000" font-family="Liberation Sans" letter-spacing="-0.6">16 to 20</text><text x="985.2" y="393.7" font-size="12" fill="#000" font-family="Liberation Sans" letter-spacing="-0.6">6 to 10</text><text x="830.8" y="405.6" font-size="12" fill="#000" font-family="Liberation Sans" letter-spacing="-0.6">0 to 5</text><rect x="807" y="486.5" width="400" height="1.3" fill="#000"></rect><text x="807.2" y="498.3" text-anchor="middle" font-size="12" fill="#000" font-family="Liberation Sans" letter-spacing="-0.5">0</text><text x="855.1" y="498.3" text-anchor="middle" font-size="12" fill="#000" font-family="Liberation Sans" letter-spacing="-0.5">10</text><text x="903.0" y="498.3" text-anchor="middle" font-size="12" fill="#000" font-family="Liberation Sans" letter-spacing="-0.5">20</text><text x="950.9" y="498.3" text-anchor="middle" font-size="12" fill="#000" font-family="Liberation Sans" letter-spacing="-0.5">30</text><text x="998.8" y="498.3" text-anchor="middle" font-size="12" fill="#000" font-family="Liberation Sans" letter-spacing="-0.5">40</text><text x="1046.7" y="498.3" text-anchor="middle" font-size="12" fill="#000" font-family="Liberation Sans" letter-spacing="-0.5">50</text><text x="1094.6" y="498.3" text-anchor="middle" font-size="12" fill="#000" font-family="Liberation Sans" letter-spacing="-0.5">60</text><text x="1142.5" y="498.3" text-anchor="middle" font-size="12" fill="#000" font-family="Liberation Sans" letter-spacing="-0.5">70</text><text x="1190.4" y="498.3" text-anchor="middle" font-size="12" fill="#000" font-family="Liberation Sans" letter-spacing="-0.5">80</text><text x="963.6" y="520.3" font-size="12" fill="#2a1aff" font-family="Liberation Sans" letter-spacing="-0.5">Number of Assets</text></svg>
<div class="a" style="left:965px;top:230px;width:66px;height:67px;background:#fff"></div>
<span class="t" style="left:990px;top:247.6px;font-size:30px;font-weight:bold;color:#000">3</span>
<div class="a" style="left:788px;top:99px;width:442px;height:444px;border:3px solid #ff0000"></div>


<!-- PANEL 4 -->
<div class="a" style="left:303px;top:548px;width:922px;height:312px;background:#e3eefc"></div>
<div class="a" style="left:303px;top:548px;width:918px;height:306px;background:#f4f4f4"></div>
<svg width="0" height="0" style="position:absolute"><defs><linearGradient id="gring" x1="0.15" y1="0.1" x2="0.85" y2="0.9"><stop offset="0" stop-color="#64b2f6"></stop><stop offset="0.5" stop-color="#4a94e4"></stop><stop offset="1" stop-color="#2868c0"></stop></linearGradient><radialGradient id="gface" cx="0.45" cy="0.35" r="0.7"><stop offset="0" stop-color="#dadada"></stop><stop offset="1" stop-color="#c8c8c8"></stop></radialGradient><radialGradient id="ghub" cx="0.4" cy="0.35" r="0.7"><stop offset="0" stop-color="#f0f0f0"></stop><stop offset="1" stop-color="#909090"></stop></radialGradient><symbol id="gauge" viewBox="0 0 100 100"><circle cx="50" cy="50" r="49.7" fill="url(#gring)"></circle><circle cx="50" cy="50" r="43.3" fill="#8a8a8a"></circle><circle cx="50" cy="50" r="42.6" fill="url(#gface)"></circle><circle cx="50" cy="50" r="28" fill="none" stroke="#5c92ea" stroke-width="1.3"></circle><path d="M44.74,73.72 L44.31,75.68" stroke="#303030" stroke-width="0.9"></path><path d="M37.85,71.04 L36.85,72.78" stroke="#303030" stroke-width="0.9"></path><path d="M32.08,66.42 L30.61,67.77" stroke="#303030" stroke-width="0.9"></path><path d="M27.98,60.27 L26.16,61.11" stroke="#303030" stroke-width="0.9"></path><circle cx="25.02" cy="53.29" r="1.25" fill="#101850"></circle><path d="M26.07,45.78 L24.10,45.43" stroke="#303030" stroke-width="0.9"></path><path d="M28.45,38.78 L26.67,37.86" stroke="#303030" stroke-width="0.9"></path><path d="M32.82,32.82 L31.40,31.40" stroke="#303030" stroke-width="0.9"></path><circle cx="38.36" cy="27.65" r="1.25" fill="#101850"></circle><path d="M45.78,26.07 L45.43,24.10" stroke="#303030" stroke-width="0.9"></path><path d="M53.17,25.91 L53.43,23.93" stroke="#303030" stroke-width="0.9"></path><path d="M60.27,27.98 L61.11,26.16" stroke="#303030" stroke-width="0.9"></path><circle cx="67.02" cy="31.42" r="1.25" fill="#101850"></circle><path d="M71.04,37.85 L72.78,36.85" stroke="#303030" stroke-width="0.9"></path><path d="M73.72,44.74 L75.68,44.31" stroke="#303030" stroke-width="0.9"></path><path d="M74.21,52.12 L76.20,52.29" stroke="#303030" stroke-width="0.9"></path><circle cx="73.28" cy="59.64" r="1.25" fill="#101850"></circle><path d="M68.61,65.62 L70.15,66.91" stroke="#303030" stroke-width="0.9"></path><path d="M63.06,70.49 L64.13,72.18" stroke="#303030" stroke-width="0.9"></path><path d="M56.29,73.47 L56.81,75.40" stroke="#303030" stroke-width="0.9"></path><path d="M48.94,74.28 L48.85,76.27" stroke="#303030" stroke-width="0.9"></path><path d="M45.18,72.69 A23.2,23.2 0 1 1 65.22,32.49 L60.43,38.00 A15.9,15.9 0 1 0 46.69,65.55Z" fill="#ffa500"></path><path d="M65.22,32.49 A23.2,23.2 0 0 1 72.81,45.77 L65.63,47.10 A15.9,15.9 0 0 0 60.43,38.00Z" fill="#9acd32"></path><path d="M72.81,45.77 A23.2,23.2 0 0 1 71.51,58.69 L64.74,55.96 A15.9,15.9 0 0 0 65.63,47.10Z" fill="#2e8b57"></path><path d="M71.51,58.69 A23.2,23.2 0 0 1 54.82,72.69 L53.31,65.55 A15.9,15.9 0 0 0 64.74,55.96Z" fill="#008000"></path><circle cx="50.1" cy="72.9" r="5.6" fill="#ff0000"></circle><text x="0" y="0" transform="translate(15.43,55.48) rotate(441.0)" text-anchor="middle" dominant-baseline="central" font-size="6" font-weight="bold" fill="#000a80" font-family="Liberation Sans">20</text><text x="0" y="0" transform="translate(33.16,18.98) rotate(511.5)" text-anchor="middle" dominant-baseline="central" font-size="6" font-weight="bold" fill="#000a80" font-family="Liberation Sans">40</text><text x="0" y="0" transform="translate(72.75,24.73) rotate(222.0)" text-anchor="middle" dominant-baseline="central" font-size="6" font-weight="bold" fill="#000a80" font-family="Liberation Sans">60</text><text x="0" y="0" transform="translate(81.02,63.42) rotate(293.4)" text-anchor="middle" dominant-baseline="central" font-size="6" font-weight="bold" fill="#000a80" font-family="Liberation Sans">80</text><path d="M21.2,45.8 L21.2,47.3 L60.8,54.2 L61.2,47.1 Z" fill="#000080"></path><circle cx="50" cy="50" r="3.4" fill="url(#ghub)" stroke="#101870" stroke-width="0.9"></circle></symbol><linearGradient id="garr" x1="0" y1="0" x2="0" y2="1"><stop offset="0" stop-color="#40c020"></stop><stop offset="0.3" stop-color="#80f020"></stop><stop offset="0.75" stop-color="#60d818"></stop><stop offset="1" stop-color="#38a818"></stop></linearGradient><symbol id="arrow" viewBox="0 0 30 30"><path d="M0.8,8.5 H17.6 V0.5 L29.2,14.5 L17.6,29 V21.3 H0.8Z" fill="url(#garr)" stroke="#2a9a2a" stroke-width="0.9" stroke-linejoin="round"></path><path d="M2,18.5 H17" stroke="#e8ffd0" stroke-width="1.2" opacity="0.9"></path><path d="M18.5,27 L28,15.5" stroke="#d8ffb0" stroke-width="1" opacity="0.8"></path></symbol></defs></svg>
<div class="a" style="left:396px;top:555px;width:208px;height:1px;background:#a2bfe6"></div>
<div class="a" style="left:767px;top:555px;width:143px;height:1px;background:#a2bfe6"></div>
<div class="a" style="left:1073px;top:555px;width:145px;height:1px;background:#a2bfe6"></div>
<span class="t" style="left: 303px; top: 549.3px; font-size: 11px; font-weight: bold; color: rgb(59, 111, 181); letter-spacing: 0.372px;">Current reading</span>
<svg class="a" style="left:382.6px;top:568.6px" width="100" height="100"><use href="#gauge" width="100" height="100"></use></svg>
<svg class="a" style="left:567.0px;top:604px" width="30" height="30"><use href="#arrow" width="30" height="30"></use></svg>
<div class="btn" style="left:567.0px;top:649px;width:36px;height:21px;border-radius:3px"></div>
<svg class="a" style="left:578.0px;top:661px" width="14" height="3"><rect x="1" y="0.5" width="2" height="2" fill="#000"></rect><rect x="6" y="0.5" width="2" height="2" fill="#000"></rect><rect x="11" y="0.5" width="2" height="2" fill="#000"></rect></svg>
<span class="t" style="left: 309.6px; top: 673px; font-size: 11px; font-weight: bold; color: rgb(0, 0, 0); letter-spacing: 0.386px;">Health index:</span>
<span class="t" style="left: 309.6px; top: 692.8px; font-size: 11px; font-weight: bold; color: rgb(0, 0, 0); letter-spacing: 0.082px;">Condition:</span>
<span class="t" style="left: 309.6px; top: 712.1px; font-size: 11px; font-weight: bold; color: rgb(0, 0, 0); letter-spacing: 0.347px;">HI change:</span>
<span class="t" style="left: 309.6px; top: 732.1px; font-size: 11px; font-weight: bold; color: rgb(0, 0, 0); letter-spacing: 0.129px;">Change:</span>
<span class="t" style="left: 309.6px; top: 751.5px; font-size: 11px; font-weight: bold; color: rgb(0, 0, 0); letter-spacing: 0.285px;">Value changed:</span>
<span class="t" style="left: 309.6px; top: 772.8px; font-size: 11px; font-weight: bold; color: rgb(0, 0, 0); letter-spacing: 0.087px;">Age:</span>
<span class="t" style="left: 309.6px; top: 792.8px; font-size: 11px; font-weight: bold; color: rgb(0, 0, 0); letter-spacing: 0.217px;">Ranking:</span>
<span class="t" style="left: 309.6px; top: 812.4px; font-size: 11px; font-weight: bold; color: rgb(0, 0, 0); letter-spacing: 0.305px;">Percentile:</span>
<span class="t" style="left: 309.6px; top: 832.8px; font-size: 11px; font-weight: bold; color: rgb(0, 0, 0); letter-spacing: 0.229px;">Calculated on:</span>
<span class="t" style="left: 441.8px; top: 673.5px; font-size: 11px; color: rgb(0, 0, 0); letter-spacing: 0.014px;">24.32</span>
<span class="t" style="left: 441.8px; top: 694.1px; font-size: 11px; color: rgb(0, 0, 0); letter-spacing: -0.659px;">Bad</span>
<span class="t" style="left: 441.8px; top: 714.3px; font-size: 11px; color: rgb(0, 0, 0); letter-spacing: -0.335px;">No change</span>
<span class="t" style="left: 441.8px; top: 734px; font-size: 11px; color: rgb(0, 0, 0); letter-spacing: -0.005px;">0.00</span>
<span class="t" style="left: 441.8px; top: 753.8px; font-size: 11px; color: rgb(0, 0, 0); letter-spacing: -0.005px;">0.00</span>
<span class="t" style="left: 441.8px; top: 773.3px; font-size: 11px; color: rgb(0, 0, 0); letter-spacing: -0.001px;">15.000 years</span>
<span class="t" style="left: 441.8px; top: 793.7px; font-size: 11px; color: rgb(0, 0, 0); letter-spacing: -0.553px;">181</span>
<span class="t" style="left: 441.8px; top: 813.3px; font-size: 11px; color: rgb(0, 0, 0); letter-spacing: -0.375px;">18</span>
<span class="t" style="left: 441.8px; top: 834.2px; font-size: 11px; color: rgb(0, 0, 0); letter-spacing: -0.002px;">9/11/2012 4:27:47 PM</span>
<span class="t" style="left:506.9px;top:732.2px;font-size:11px;color:#000">%</span>
<span class="t" style="left:487.7px;top:793.1px;font-size:11px;color:#000">of</span>
<span class="t" style="left:505.4px;top:794.6px;font-size:11px;color:#000">222</span>
<span class="t" style="left: 608.5px; top: 549.3px; font-size: 11px; font-weight: bold; color: rgb(59, 111, 181); letter-spacing: 0.294px;">Previous published reading</span>
<svg class="a" style="left:688.6px;top:568.6px" width="100" height="100"><use href="#gauge" width="100" height="100"></use></svg>
<svg class="a" style="left:873.0px;top:604px" width="30" height="30"><use href="#arrow" width="30" height="30"></use></svg>
<div class="btn" style="left:873.0px;top:649px;width:36px;height:21px;border-radius:3px"></div>
<svg class="a" style="left:884.0px;top:661px" width="14" height="3"><rect x="1" y="0.5" width="2" height="2" fill="#000"></rect><rect x="6" y="0.5" width="2" height="2" fill="#000"></rect><rect x="11" y="0.5" width="2" height="2" fill="#000"></rect></svg>
<span class="t" style="left: 615.6px; top: 673px; font-size: 11px; font-weight: bold; color: rgb(0, 0, 0); letter-spacing: 0.386px;">Health index:</span>
<span class="t" style="left: 615.6px; top: 692.8px; font-size: 11px; font-weight: bold; color: rgb(0, 0, 0); letter-spacing: 0.082px;">Condition:</span>
<span class="t" style="left: 615.6px; top: 712.1px; font-size: 11px; font-weight: bold; color: rgb(0, 0, 0); letter-spacing: 0.347px;">HI change:</span>
<span class="t" style="left: 615.6px; top: 732.1px; font-size: 11px; font-weight: bold; color: rgb(0, 0, 0); letter-spacing: 0.129px;">Change:</span>
<span class="t" style="left: 615.6px; top: 751.5px; font-size: 11px; font-weight: bold; color: rgb(0, 0, 0); letter-spacing: 0.285px;">Value changed:</span>
<span class="t" style="left: 615.6px; top: 772.8px; font-size: 11px; font-weight: bold; color: rgb(0, 0, 0); letter-spacing: 0.087px;">Age:</span>
<span class="t" style="left: 615.6px; top: 792.8px; font-size: 11px; font-weight: bold; color: rgb(0, 0, 0); letter-spacing: 0.217px;">Ranking:</span>
<span class="t" style="left: 615.6px; top: 812.4px; font-size: 11px; font-weight: bold; color: rgb(0, 0, 0); letter-spacing: 0.305px;">Percentile:</span>
<span class="t" style="left: 615.6px; top: 832.8px; font-size: 11px; font-weight: bold; color: rgb(0, 0, 0); letter-spacing: 0.229px;">Calculated on:</span>
<span class="t" style="left: 747.8px; top: 673.5px; font-size: 11px; color: rgb(0, 0, 0); letter-spacing: 0.014px;">24.32</span>
<span class="t" style="left: 747.8px; top: 694.1px; font-size: 11px; color: rgb(0, 0, 0); letter-spacing: -0.659px;">Bad</span>
<span class="t" style="left: 747.8px; top: 714.3px; font-size: 11px; color: rgb(0, 0, 0); letter-spacing: -0.335px;">No change</span>
<span class="t" style="left: 747.8px; top: 734px; font-size: 11px; color: rgb(0, 0, 0); letter-spacing: -0.005px;">0.00</span>
<span class="t" style="left: 747.8px; top: 753.8px; font-size: 11px; color: rgb(0, 0, 0); letter-spacing: -0.005px;">0.00</span>
<span class="t" style="left: 747.8px; top: 773.3px; font-size: 11px; color: rgb(0, 0, 0); letter-spacing: -0.001px;">15.000 years</span>
<span class="t" style="left: 747.8px; top: 793.7px; font-size: 11px; color: rgb(0, 0, 0); letter-spacing: -0.553px;">181</span>
<span class="t" style="left: 747.8px; top: 813.3px; font-size: 11px; color: rgb(0, 0, 0); letter-spacing: -0.375px;">18</span>
<span class="t" style="left:747.8px;top:834.2px;font-size:11px;color:#000">8/2/2012 4:06:23 PM</span>
<span class="t" style="left:812.9px;top:732.2px;font-size:11px;color:#000">%</span>
<span class="t" style="left:793.7px;top:793.1px;font-size:11px;color:#000">of</span>
<span class="t" style="left:811.4px;top:794.6px;font-size:11px;color:#000">223</span>
<span class="t" style="left: 914.8px; top: 549.3px; font-size: 11px; font-weight: bold; color: rgb(59, 111, 181); letter-spacing: 0.294px;">Previous published reading</span>
<svg class="a" style="left:994.9px;top:568.6px" width="100" height="100"><use href="#gauge" width="100" height="100"></use></svg>
<svg class="a" style="left:1181.0px;top:604px" width="30" height="30"><use href="#arrow" width="30" height="30"></use></svg>
<div class="btn" style="left:1181.0px;top:649px;width:36px;height:21px;border-radius:3px"></div>
<svg class="a" style="left:1192.0px;top:661px" width="14" height="3"><rect x="1" y="0.5" width="2" height="2" fill="#000"></rect><rect x="6" y="0.5" width="2" height="2" fill="#000"></rect><rect x="11" y="0.5" width="2" height="2" fill="#000"></rect></svg>
<span class="t" style="left: 921.9px; top: 673px; font-size: 11px; font-weight: bold; color: rgb(0, 0, 0); letter-spacing: 0.386px;">Health index:</span>
<span class="t" style="left: 921.9px; top: 692.8px; font-size: 11px; font-weight: bold; color: rgb(0, 0, 0); letter-spacing: 0.082px;">Condition:</span>
<span class="t" style="left: 921.9px; top: 712.1px; font-size: 11px; font-weight: bold; color: rgb(0, 0, 0); letter-spacing: 0.347px;">HI change:</span>
<span class="t" style="left: 921.9px; top: 732.1px; font-size: 11px; font-weight: bold; color: rgb(0, 0, 0); letter-spacing: 0.129px;">Change:</span>
<span class="t" style="left: 921.9px; top: 751.5px; font-size: 11px; font-weight: bold; color: rgb(0, 0, 0); letter-spacing: 0.285px;">Value changed:</span>
<span class="t" style="left: 921.9px; top: 772.8px; font-size: 11px; font-weight: bold; color: rgb(0, 0, 0); letter-spacing: 0.087px;">Age:</span>
<span class="t" style="left: 921.9px; top: 792.8px; font-size: 11px; font-weight: bold; color: rgb(0, 0, 0); letter-spacing: 0.217px;">Ranking:</span>
<span class="t" style="left: 921.9px; top: 812.4px; font-size: 11px; font-weight: bold; color: rgb(0, 0, 0); letter-spacing: 0.305px;">Percentile:</span>
<span class="t" style="left: 921.9px; top: 832.8px; font-size: 11px; font-weight: bold; color: rgb(0, 0, 0); letter-spacing: 0.229px;">Calculated on:</span>
<span class="t" style="left: 1054.1px; top: 673.5px; font-size: 11px; color: rgb(0, 0, 0); letter-spacing: 0.014px;">24.32</span>
<span class="t" style="left: 1054.1px; top: 694.1px; font-size: 11px; color: rgb(0, 0, 0); letter-spacing: -0.659px;">Bad</span>
<span class="t" style="left: 1054.1px; top: 714.3px; font-size: 11px; color: rgb(0, 0, 0); letter-spacing: -0.335px;">No change</span>
<span class="t" style="left: 1054.1px; top: 734px; font-size: 11px; color: rgb(0, 0, 0); letter-spacing: -0.005px;">0.00</span>
<span class="t" style="left: 1054.1px; top: 753.8px; font-size: 11px; color: rgb(0, 0, 0); letter-spacing: -0.005px;">0.00</span>
<span class="t" style="left: 1054.1px; top: 773.3px; font-size: 11px; color: rgb(0, 0, 0); letter-spacing: -0.001px;">15.000 years</span>
<span class="t" style="left: 1054.1px; top: 793.7px; font-size: 11px; color: rgb(0, 0, 0); letter-spacing: -0.553px;">181</span>
<span class="t" style="left: 1054.1px; top: 813.3px; font-size: 11px; color: rgb(0, 0, 0); letter-spacing: -0.375px;">18</span>
<span class="t" style="left:1054.1px;top:834.2px;font-size:11px;color:#000">7/18/2012 11:08:23 AM</span>
<span class="t" style="left:1119.2px;top:732.2px;font-size:11px;color:#000">%</span>
<span class="t" style="left:1100.0px;top:793.1px;font-size:11px;color:#000">of</span>
<div class="a" style="left:792px;top:580px;width:66px;height:67px;background:#fff"></div>
<span class="t" style="left:816.3px;top:597.6px;font-size:30px;font-weight:bold;color:#000">4</span>
<div class="a" style="left:300px;top:545px;width:928px;height:318px;border:3px solid #ff0000"></div>


</body></html>
